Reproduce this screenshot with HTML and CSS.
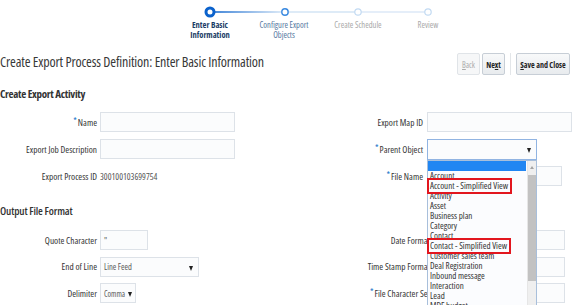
FILE: index.html
```html
<!DOCTYPE html>
<html>
<head>
<meta charset="utf-8">
<link rel="stylesheet" href="styles.css">
</head>
<body>
<div class="page">
  <div class="train">
    <svg class="track" width="572" height="20" viewBox="0 0 572 20">
      <defs>
        <linearGradient id="g1" x1="215" y1="0" x2="282" y2="0" gradientUnits="userSpaceOnUse">
          <stop offset="0" stop-color="#0b62cc"/>
          <stop offset="1" stop-color="#cfe2f5"/>
        </linearGradient>
      </defs>
      <line x1="215" y1="12" x2="282" y2="12" stroke="url(#g1)" stroke-width="1.5"/>
      <line x1="289" y1="12" x2="355" y2="12" stroke="#d3e4f5" stroke-width="1.5"/>
      <line x1="361" y1="12" x2="425" y2="12" stroke="#dce9f7" stroke-width="1.5"/>
      <circle cx="210" cy="12" r="4" fill="#fff" stroke="#0b62cc" stroke-width="3"/>
      <circle cx="285" cy="12" r="3.2" fill="#fff" stroke="#3b8ae0" stroke-width="1.4"/>
      <circle cx="358" cy="12" r="3.2" fill="#fff" stroke="#c2daf2" stroke-width="1.2"/>
      <circle cx="428" cy="12" r="3.2" fill="#fff" stroke="#c2daf2" stroke-width="1.2"/>
    </svg>
    <div class="steps">
      <div class="step current">Enter Basic<br>Information</div>
      <div class="step next">Configure Export<br>Objects</div>
      <div class="step future">Create Schedule</div>
      <div class="step future last">Review</div>
    </div>
  </div>

  <div class="titlebar">
    <h1 class="title">Create Export Process Definition: Enter Basic Information</h1>
    <div class="actions">
      <span class="btn small disabled"><u>B</u>ack</span>
      <span class="btn small">Ne<u>x</u>t</span>
      <span class="sep"></span>
      <span class="btn large"><u>S</u>ave and Close</span>
    </div>
  </div>

  <h2 class="section first">Create Export Activity</h2>
  <div class="form">
    <div class="lbl"><span class="req">*</span> Name</div>
    <div class="ctl"><div class="field w134"></div></div>
    <div class="lbl">Export Map ID</div>
    <div class="ctl"><div class="field wfull"></div></div>

    <div class="lbl">Export Job Description</div>
    <div class="ctl"><div class="field w134"></div></div>
    <div class="lbl"><span class="req">*</span> Parent Object</div>
    <div class="ctl"><div class="field select focus w110"><span class="val"></span><span class="arrow"></span></div></div>

    <div class="lbl">Export Process ID</div>
    <div class="ctl"><span class="readonly">300100103699754</span></div>
    <div class="lbl"><span class="req">*</span> File Name</div>
    <div class="ctl"><div class="field w135"></div></div>
  </div>

  <h2 class="section second">Output File Format</h2>
  <div class="form form2">
    <div class="lbl">Quote Character</div>
    <div class="ctl"><div class="field w48"><span class="val">"</span></div></div>
    <div class="lbl">Date Format</div>
    <div class="ctl"><div class="field w135"></div></div>

    <div class="lbl">End of Line</div>
    <div class="ctl"><div class="field select w99"><span class="val">Line Feed</span><span class="arrow"></span></div></div>
    <div class="lbl">Time Stamp Format</div>
    <div class="ctl"><div class="field w135"></div></div>

    <div class="lbl">Delimiter</div>
    <div class="ctl"><div class="field select w35"><span class="val">Comma</span><span class="arrow"></span></div></div>
    <div class="lbl"><span class="req">*</span> File Character Set</div>
    <div class="ctl"><div class="field w135"></div></div>
  </div>

  <div class="popup">
    <div class="options">
      <div class="opt selected">&nbsp;</div>
      <div class="opt">Account</div>
      <div class="opt"><span class="mark">Account - Simplified View</span></div>
      <div class="opt">Activity</div>
      <div class="opt">Asset</div>
      <div class="opt">Business plan</div>
      <div class="opt">Category</div>
      <div class="opt">Contact</div>
      <div class="opt"><span class="mark">Contact - Simplified View</span></div>
      <div class="opt">Customer sales team</div>
      <div class="opt">Deal Registration</div>
      <div class="opt">Inbound message</div>
      <div class="opt">Interaction</div>
      <div class="opt">Lead</div>
      <div class="opt">MDF budget</div>
    </div>
    <div class="scrollbar">
      <div class="up"></div>
      <div class="thumb"></div>
    </div>
  </div>
</div>
</body>
</html>
```
FILE: styles.css
```css
* { box-sizing: border-box; }
body {
  margin: 0;
  font-family: "Open Sans", "Liberation Sans", sans-serif;
  font-stretch: 75%;
  color: #333;
  background: #fff;
}
.page {
  position: relative;
  width: 572px;
  height: 305px;
  overflow: hidden;
}

/* train */
.track { display: block; }
.steps {
  display: flex;
  padding-left: 173px;
}
.step {
  width: 74px;
  text-align: center;
  font-size: 8.5px;
  line-height: 10px;
  color: #a9a9a9;
}
.step.last { width: 66px; }
.step.current { color: #1c3d66; font-weight: 700; }
.step.next { color: #5577a0; }

/* title bar */
.titlebar {
  display: flex;
  align-items: center;
  justify-content: space-between;
  height: 30px;
  margin-top: 8px;
  padding-right: 2px;
}
.title {
  margin: 0 0 2px 0;
  font-size: 14px;
  font-weight: 400;
  letter-spacing: -0.15px;
  color: #383838;
  line-height: 18px;
}
.actions {
  display: flex;
  align-items: center;
  gap: 2px;
  margin-top: 2px;
}
.btn {
  display: flex;
  align-items: center;
  justify-content: center;
  height: 22px;
  border: 1px solid #c7ced6;
  border-radius: 2px;
  background: linear-gradient(#f8f9fa, #e8ebee);
  font-size: 8px;
  font-weight: 700;
  color: #252525;
}
.btn.small { width: 23px; }
.btn.large { width: 54px; }
.btn.disabled {
  color: #ababab;
  font-weight: 400;
  border-color: #e0e4e8;
  background: #f6f7f8;
}
.sep {
  width: 1px;
  height: 22px;
  background: #e3e6e9;
  margin: 0 3px;
}

/* sections */
.section {
  margin: 0;
  font-size: 11px;
  font-weight: 700;
  letter-spacing: -0.3px;
  line-height: 12px;
  color: #333;
}
.section.first { margin-top: 10px; }
.section.second { margin-top: 19px; font-weight: 600; letter-spacing: -0.15px; }

/* form grid */
.form {
  display: grid;
  grid-template-columns: 100px 240px 87px 145px;
  grid-auto-rows: 20px;
  row-gap: 7px;
  margin-top: 12px;
}
.form2 {
  grid-template-columns: 100px 240px 90px 142px;
  row-gap: 6.5px;
  margin-top: 13px;
}
.lbl {
  display: flex;
  align-items: center;
  justify-content: flex-end;
  padding-right: 3px;
  font-size: 9.3px;
  font-weight: 500;
  color: #333;
  white-space: nowrap;
}
.form .lbl:nth-child(4n+3) { padding-right: 4px; }
.form2 .lbl:nth-child(4n+3) { padding-right: 0; }
.req {
  color: #1a73c9;
  font-size: 9px;
  position: relative;
  top: -2px;
  margin-right: 1px;
}
.ctl {
  display: flex;
  align-items: center;
}
.field {
  position: relative;
  display: flex;
  align-items: center;
  height: 20px;
  border: 1px solid #dde2e8;
  background: #fbfcfd;
  padding-left: 3px;
}
.field.focus { border-color: #91b4e2; height: 21px; }
.w134 { width: 135px; }
.w135 { width: 135px; }
.w110 { width: 110px; }
.w99 { width: 99px; }
.w48 { width: 48px; }
.w35 { width: 36px; }
.wfull { width: 150px; }
.val {
  font-size: 8.5px;
  color: #5a5a5a;
}
.w35 .val { font-size: 8px; }
.arrow {
  position: absolute;
  right: 5px;
  top: 8px;
  width: 0;
  height: 0;
  border-left: 2.5px solid transparent;
  border-right: 2.5px solid transparent;
  border-top: 5px solid #222;
}
.w35 .arrow { right: 3px; }
.readonly {
  font-size: 9px;
  color: #555;
}

/* popup list */
.popup {
  position: absolute;
  left: 427px;
  top: 160px;
  width: 110px;
  height: 160px;
  display: flex;
  border: 1px solid #a8bfdb;
  background: #fbfcfe;
}
.options {
  flex: 1;
}
.opt {
  height: 10px;
  line-height: 10px;
  font-size: 9px;
  color: #333;
  padding-left: 2px;
  white-space: nowrap;
}
.opt.selected { background: #2186f2; margin-right: 1px; }
.mark { position: relative; }
.mark::after {
  content: "";
  position: absolute;
  left: -3px;
  right: -4px;
  top: -1px;
  bottom: -2px;
  border: 2px solid #e2161e;
}
.scrollbar {
  width: 9px;
  background: #efefef;
  border-left: 1px solid #e6e6e6;
}
.up {
  height: 12px;
  position: relative;
}
.up::after {
  content: "";
  position: absolute;
  left: 2px;
  top: 5px;
  border-left: 2px solid transparent;
  border-right: 2px solid transparent;
  border-bottom: 3px solid #a3a3a3;
}
.thumb {
  height: 106px;
  margin-top: 2px;
  background: #c2c2c2;
}
```
